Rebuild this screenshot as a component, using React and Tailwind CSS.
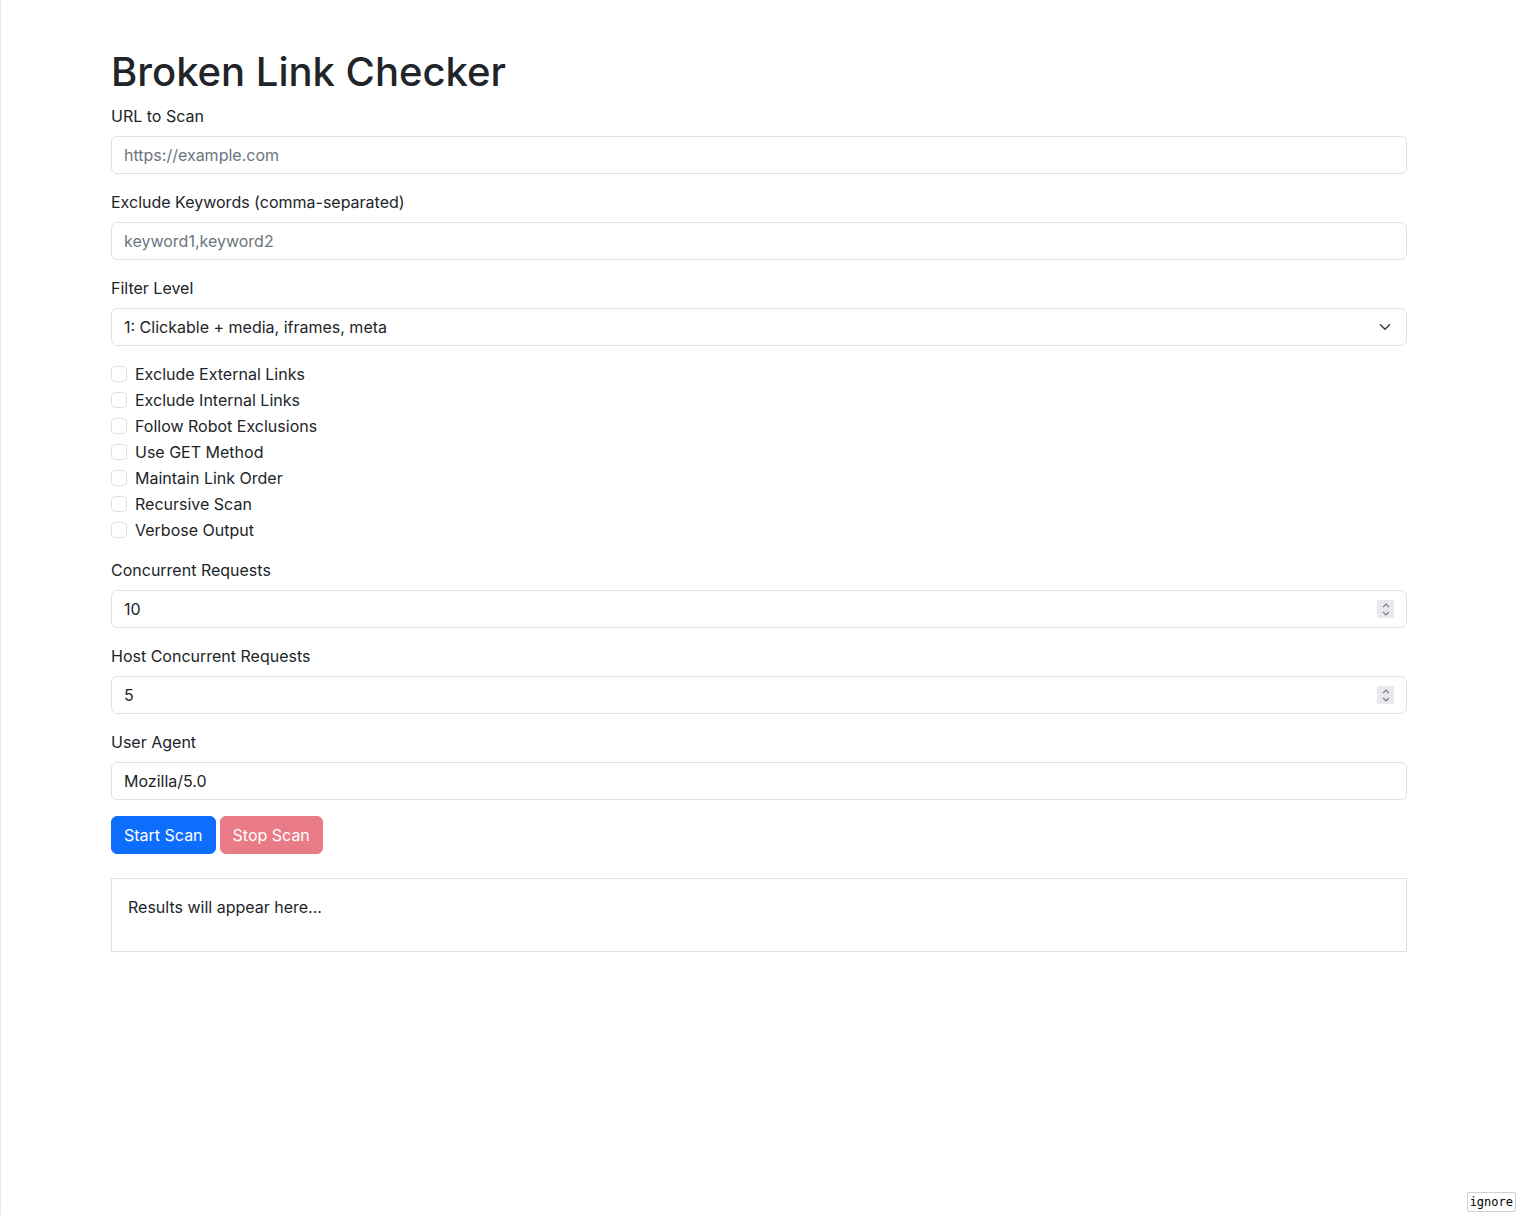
import { useState } from 'react';

const checks = [
  'Exclude External Links',
  'Exclude Internal Links',
  'Follow Robot Exclusions',
  'Use GET Method',
  'Maintain Link Order',
  'Recursive Scan',
  'Verbose Output',
];

const inputClass =
  'block w-full h-[38px] px-3 py-1.5 text-base text-[#212529] bg-white border border-[#dee2e6] rounded-[6px] outline-none placeholder:text-[#6c757d]';

function Field({ label, children }) {
  return (
    <div className="mb-4">
      <label className="block mb-2 leading-6">{label}</label>
      {children}
    </div>
  );
}

function NumberInput({ value }) {
  return (
    <div className="relative">
      <input
        type="number"
        className={
          inputClass +
          ' [appearance:textfield] [&::-webkit-inner-spin-button]:appearance-none [&::-webkit-outer-spin-button]:appearance-none'
        }
        defaultValue={value}
      />
      <div className="absolute right-[13px] top-[10px] w-[17px] h-[18px] bg-[#e9e9ed] flex flex-col items-center justify-center gap-[3px] pointer-events-none">
        <svg width="8" height="5" viewBox="0 0 8 5" fill="none" stroke="#777" strokeWidth="1.2">
          <path d="M1 4.2 4 1.2l3 3" />
        </svg>
        <svg width="8" height="5" viewBox="0 0 8 5" fill="none" stroke="#777" strokeWidth="1.2">
          <path d="M1 0.8 4 3.8l3-3" />
        </svg>
      </div>
    </div>
  );
}

export default function App() {
  const [url, setUrl] = useState('');
  const [keywords, setKeywords] = useState('');
  const [level, setLevel] = useState('1');
  const [agent, setAgent] = useState('Mozilla/5.0');

  return (
    <div
      className="min-h-screen bg-white shadow-[inset_1px_0_0_#e6e6e6] text-[#212529] text-base leading-6"
      style={{ fontFamily: 'Inter, "Noto Sans", sans-serif' }}
    >
      <div className="max-w-[1320px] mx-auto px-3 pt-12">
        <h1 className="text-[40px] leading-[48px] font-medium mb-2">Broken Link Checker</h1>

        <Field label="URL to Scan">
          <input
            type="text"
            className={inputClass}
            placeholder="https://example.com"
            value={url}
            onChange={(e) => setUrl(e.target.value)}
          />
        </Field>

        <Field label="Exclude Keywords (comma-separated)">
          <input
            type="text"
            className={inputClass}
            placeholder="keyword1,keyword2"
            value={keywords}
            onChange={(e) => setKeywords(e.target.value)}
          />
        </Field>

        <Field label="Filter Level">
          <div className="relative">
            <select
              className={inputClass + ' appearance-none pr-9'}
              value={level}
              onChange={(e) => setLevel(e.target.value)}
            >
              <option value="0">0: Clickable links</option>
              <option value="1">1: Clickable + media, iframes, meta</option>
              <option value="2">2: All links</option>
            </select>
            <svg
              className="absolute right-[14px] top-[13px] pointer-events-none"
              width="16"
              height="12"
              viewBox="0 0 16 16"
              fill="none"
              stroke="#343a40"
              strokeWidth="2"
              strokeLinecap="round"
              strokeLinejoin="round"
            >
              <path d="m2 5 6 6 6-6" />
            </svg>
          </div>
        </Field>

        <div className="mb-4">
          {checks.map((c) => (
            <label key={c} className="flex items-start min-h-6 mb-0.5">
              <input
                type="checkbox"
                className="appearance-none w-4 h-4 mt-1 mr-2 shrink-0 border border-[#dee2e6] rounded-[4px] bg-white"
              />
              <span>{c}</span>
            </label>
          ))}
        </div>

        <Field label="Concurrent Requests">
          <NumberInput value={10} />
        </Field>

        <Field label="Host Concurrent Requests">
          <NumberInput value={5} />
        </Field>

        <Field label="User Agent">
          <input
            type="text"
            className={inputClass}
            value={agent}
            onChange={(e) => setAgent(e.target.value)}
          />
        </Field>

        <div className="flex gap-1">
          <button className="h-[38px] px-3 rounded-[6px] bg-[#0d6efd] border border-[#0d6efd] text-white">
            Start Scan
          </button>
          <button
            disabled
            className="h-[38px] px-3 rounded-[6px] bg-[#dc3545] border border-[#dc3545] text-white opacity-65"
          >
            Stop Scan
          </button>
        </div>

        <div className="mt-6 p-4 border border-[#dee2e6]">
          <p className="mb-4">Results will appear here...</p>
        </div>
      </div>

      <div
        className="fixed bottom-[3px] right-[2px] px-[2px] text-[12px] leading-[18px] text-black bg-white border border-[#d0d0d0] rounded-[2px]"
        style={{ fontFamily: '"DejaVu Sans Mono", monospace' }}
      >
        ignore
      </div>
    </div>
  );
}
